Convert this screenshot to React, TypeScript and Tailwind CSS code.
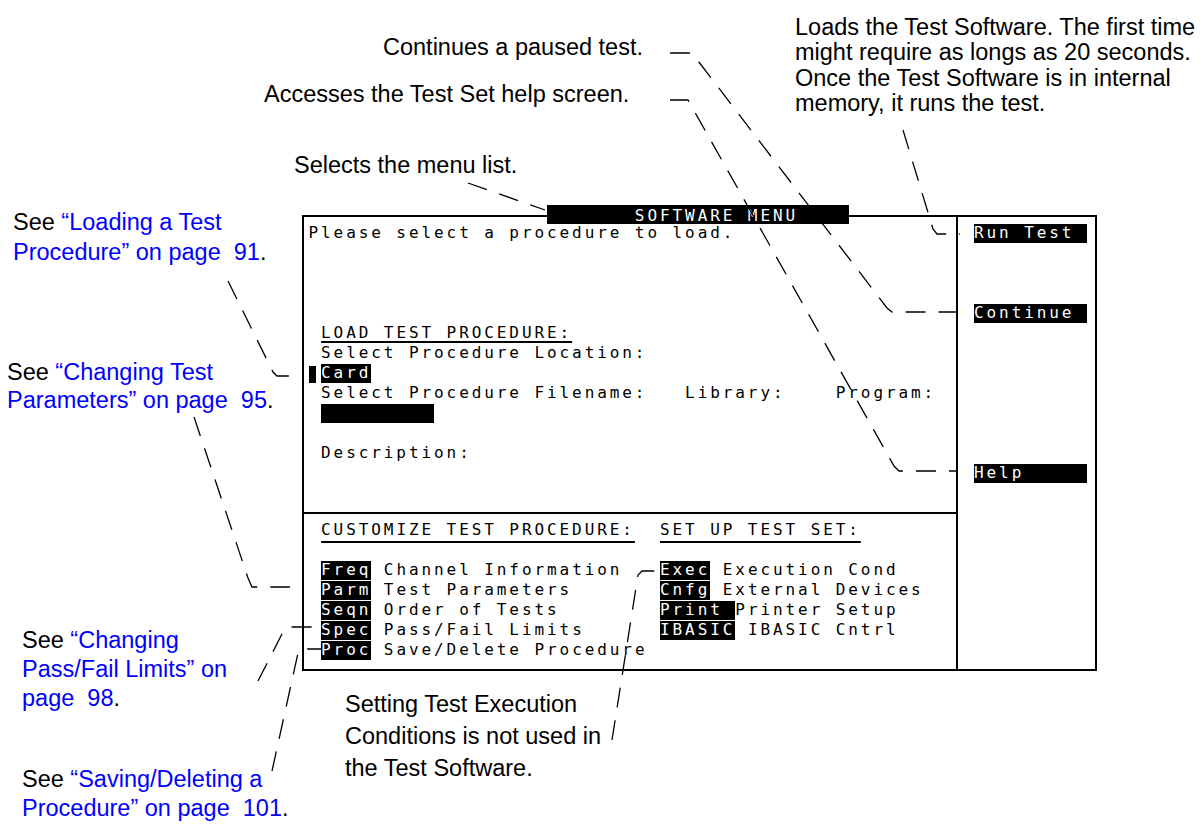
import type { ReactNode } from "react";

const mono = "font-['DejaVu_Sans_Mono',monospace] text-[16px] tracking-[2.92px] text-black";
const sans = "font-['Liberation_Sans',Arial,sans-serif] text-[23.5px] text-black whitespace-pre";

function Row({ children }: { children?: ReactNode }) {
  return <div className="flex h-[20px] whitespace-pre leading-[17px]">{children}</div>;
}

// blank character cells (flex drops whitespace-only text, so keep them in a span)
function Gap({ n = 1 }: { n?: number }) {
  return <span>{"\u00a0".repeat(n)}</span>;
}

function Hi({ children }: { children: ReactNode }) {
  return <span className="h-[19px] bg-black text-white">{children}</span>;
}

function Ul({ children, low }: { children: ReactNode; low?: boolean }) {
  return (
    <span className={low ? "underline decoration-[1.5px] underline-offset-[6px]" : "underline decoration-[1.5px] underline-offset-[3px]"}>
      {children}
    </span>
  );
}

function Link({ children }: { children: ReactNode }) {
  return <span className="text-[#0000ff]">{children}</span>;
}

// leader lines, in page coordinates
const leaders = [
  "670,53 692,53 887,308 892,312 958,312",
  "670,100 688,100 894,466 899,471 957,471",
  "903,130 933,229 937,234 960,234",
  "468,183 545,210",
  "228,281 273,372 277,376 289,376",
  "194,417 248,578 252,587 290,587",
  "258,681 283,632 287,627 322,627",
  "272,771 298,653 301,649 322,649",
  "612,740 638,575 642,571 661,571",
];

export default function App() {
  return (
    <div className="relative w-[1203px] h-[824px] overflow-hidden bg-white pt-[215px] pl-[302px]">
      {/* instrument screen */}
      <div className={`relative flex w-[795px] h-[456px] border-2 border-black ${mono}`}>
        <div className="absolute left-[243px] top-[-12px] h-[19px] w-[302px] bg-black pt-[2px] leading-[17px] text-white whitespace-pre">
          {"       SOFTWARE MENU"}
        </div>

        <div className="flex w-[652px] flex-col">
          <div className="h-[295px] pt-[7px] pl-[4.5px]">
            <Row>Please select a procedure to load.</Row>
            <Row />
            <Row />
            <Row />
            <Row />
            <Row>
              <Gap />
              <Ul>LOAD TEST PROCEDURE:</Ul>
            </Row>
            <Row>{" Select Procedure Location:"}</Row>
            <Row>
              <span className="flex w-[12.55px]">
                <span className="mt-[2px] h-[17px] w-[7px] bg-black" />
              </span>
              <Hi>Card</Hi>
            </Row>
            <Row>{" Select Procedure Filename:   Library:    Program:"}</Row>
            <Row>
              <Gap />
              <Hi>{"\u00a0".repeat(9)}</Hi>
            </Row>
            <Row />
            <Row>{" Description:"}</Row>
          </div>

          <div className="h-[2px] bg-black" />

          <div className="flex-1 pt-[7px] pl-[4.5px]">
            <Row>
              <Gap />
              <Ul low>CUSTOMIZE TEST PROCEDURE:</Ul>
              <Gap n={2} />
              <Ul low>SET UP TEST SET:</Ul>
            </Row>
            <Row />
            <Row>
              <Gap />
              <Hi>Freq</Hi>
              {" Channel Information   "}
              <Hi>Exec</Hi>
              {" Execution Cond"}
            </Row>
            <Row>
              <Gap />
              <Hi>Parm</Hi>
              {" Test Parameters       "}
              <Hi>Cnfg</Hi>
              {" External Devices"}
            </Row>
            <Row>
              <Gap />
              <Hi>Seqn</Hi>
              {" Order of Tests        "}
              <Hi>{"Print\u00a0"}</Hi>
              {"Printer Setup"}
            </Row>
            <Row>
              <Gap />
              <Hi>Spec</Hi>
              {" Pass/Fail Limits      "}
              <Hi>IBASIC</Hi>
              {" IBASIC Cntrl"}
            </Row>
            <Row>
              <Gap />
              <Hi>Proc</Hi>
              {" Save/Delete Procedure"}
            </Row>
          </div>
        </div>

        <div className="w-[2px] bg-black" />

        <div className="flex-1 pt-[7px] pl-[16px]">
          <Row>
            <Hi>{"Run Test\u00a0"}</Hi>
          </Row>
          <Row />
          <Row />
          <Row />
          <Row>
            <Hi>{"Continue\u00a0"}</Hi>
          </Row>
          <Row />
          <Row />
          <Row />
          <Row />
          <Row />
          <Row />
          <Row />
          <Row>
            <Hi>{"Help\u00a0\u00a0\u00a0\u00a0\u00a0"}</Hi>
          </Row>
        </div>
      </div>

      {/* callouts */}
      <div className={`absolute left-[795px] top-[15px] leading-[25.3px] ${sans}`}>
        <div>Loads the Test Software. The first time</div>
        <div>might require as longs as 20 seconds.</div>
        <div>Once the Test Software is in internal</div>
        <div>memory, it runs the test.</div>
      </div>
      <div className={`absolute left-[383px] top-[34px] leading-[26px] ${sans}`}>Continues a paused test.</div>
      <div className={`absolute left-[264px] top-[81px] leading-[26px] ${sans}`}>Accesses the Test Set help screen.</div>
      <div className={`absolute left-[294px] top-[152px] leading-[26px] ${sans}`}>Selects the menu list.</div>

      <div className={`absolute left-[13px] top-[207px] leading-[30px] ${sans}`}>
        <div>
          See <Link>“Loading a Test</Link>
        </div>
        <div>
          <Link>Procedure” on page  91</Link>.
        </div>
      </div>
      <div className={`absolute left-[7px] top-[358px] leading-[28px] ${sans}`}>
        <div>
          See <Link>“Changing Test</Link>
        </div>
        <div>
          <Link>Parameters” on page  95</Link>.
        </div>
      </div>
      <div className={`absolute left-[22px] top-[626px] leading-[29px] ${sans}`}>
        <div>
          See <Link>“Changing</Link>
        </div>
        <div>
          <Link>Pass/Fail Limits” on</Link>
        </div>
        <div>
          <Link>page  98</Link>.
        </div>
      </div>
      <div className={`absolute left-[22px] top-[765px] leading-[29px] ${sans}`}>
        <div>
          See <Link>“Saving/Deleting a</Link>
        </div>
        <div>
          <Link>Procedure” on page  101</Link>.
        </div>
      </div>
      <div className={`absolute left-[345px] top-[688px] leading-[32px] ${sans}`}>
        <div>Setting Test Execution</div>
        <div>Conditions is not used in</div>
        <div>the Test Software.</div>
      </div>

      <svg className="pointer-events-none absolute inset-0" width="1203" height="824" viewBox="0 0 1203 824">
        {leaders.map((pts) => (
          <polyline key={pts} points={pts} fill="none" stroke="#000" strokeWidth="1.3" strokeDasharray="20 13" />
        ))}
      </svg>
    </div>
  );
}
